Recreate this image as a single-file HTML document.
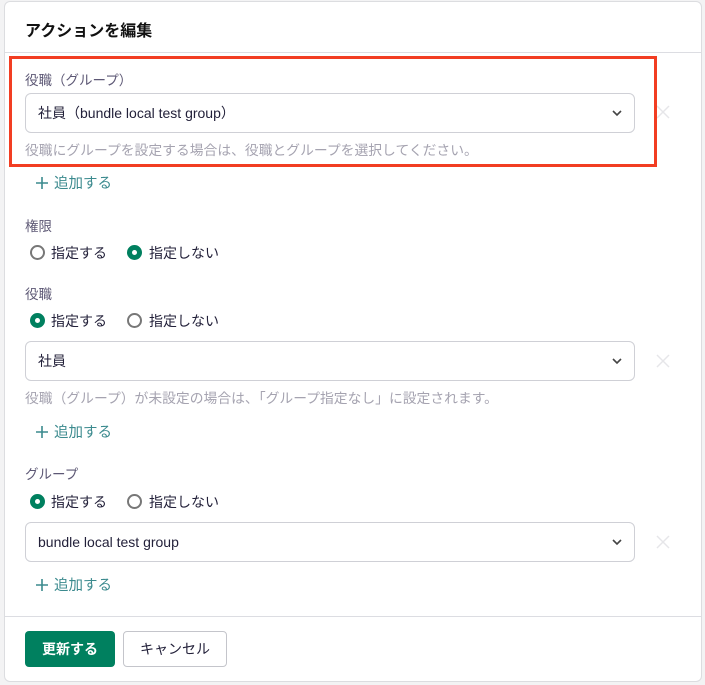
<!DOCTYPE html>
<html><head><meta charset="utf-8"><style>
*{box-sizing:border-box;margin:0;padding:0}
body{width:705px;height:685px;background:#f3f3f4;font-family:"Liberation Sans","Noto Sans CJK JP",sans-serif;position:relative;overflow:hidden;color:#23213a}
.card{position:absolute;left:4px;top:1px;width:698px;height:681px;background:#fff;border:1px solid #dcdde0;border-radius:6px}
.a{position:absolute;white-space:nowrap}
.title{left:25px;top:17px;font-size:16px;font-weight:bold;color:#111}
.hr{position:absolute;left:5px;width:696px;height:1px;background:#dcdde2}
.lbl{font-size:13.5px;color:#5d5875}
.help{font-size:13.8px;color:#a5a3b0}
.sel{position:absolute;left:25px;width:610px;height:40px;border:1px solid #cfd0d6;border-radius:6px;font-size:14px;padding:0 12px;line-height:38px;color:#23213a}
.sel svg{position:absolute;right:11px;top:15px}
.x{position:absolute;left:655px}
.add{font-size:14.5px;color:#3b8a8e}
.add svg{display:inline-block;margin-right:6px;vertical-align:-1px}
.r{position:absolute;width:15px;height:15px;border-radius:50%;border:2px solid #777}
.r.on{border:none;background:#00805f}
.r.on::after{content:"";position:absolute;left:5px;top:5px;width:5px;height:5px;border-radius:50%;background:#fff}
.rt{font-size:14px;color:#23213a}
.red{position:absolute;left:9px;top:56px;width:648px;height:111px;border:3px solid #f23d22}
.btn{position:absolute;top:631px;height:36px;border-radius:4px;font-size:14px;text-align:center;line-height:36px}
</style></head><body>
<div class="card"></div>
<div class="a title">アクションを編集</div>
<div class="hr" style="top:52px"></div>
<div class="hr" style="top:616px"></div>

<div class="a lbl" style="left:25px;top:69px">役職（グループ）</div>
<div class="sel" style="top:93px">社員（bundle local test group）<svg width="12" height="8"><path d="M2 2l4 4 4-4" stroke="#444" stroke-width="1.6" fill="none"/></svg></div>
<svg class="x" style="top:104px" width="16" height="16"><path d="M2 2l12 12M14 2L2 14" stroke="#e6e6e9" stroke-width="1.5"/></svg>
<div class="a help" style="left:25px;top:139px">役職にグループを設定する場合は、役職とグループを選択してください。</div>
<div class="red"></div>
<div class="a add" style="left:36px;top:172px"><svg width="12" height="12"><path d="M6 0v12M0 6h12" stroke="#3b8a8e" stroke-width="1.6"/></svg>追加する</div>

<div class="a lbl" style="left:25px;top:215px">権限</div>
<div class="r" style="left:30px;top:245px"></div><div class="a rt" style="left:51px;top:243px">指定する</div>
<div class="r on" style="left:127px;top:245px"></div><div class="a rt" style="left:149px;top:243px">指定しない</div>

<div class="a lbl" style="left:25px;top:283px">役職</div>
<div class="r on" style="left:30px;top:313px"></div><div class="a rt" style="left:51px;top:311px">指定する</div>
<div class="r" style="left:127px;top:313px"></div><div class="a rt" style="left:149px;top:311px">指定しない</div>
<div class="sel" style="top:341px">社員<svg width="12" height="8"><path d="M2 2l4 4 4-4" stroke="#444" stroke-width="1.6" fill="none"/></svg></div>
<svg class="x" style="top:353px" width="16" height="16"><path d="M2 2l12 12M14 2L2 14" stroke="#e6e6e9" stroke-width="1.5"/></svg>
<div class="a help" style="left:25px;top:387px">役職（グループ）が未設定の場合は、「グループ指定なし」に設定されます。</div>
<div class="a add" style="left:36px;top:421px"><svg width="12" height="12"><path d="M6 0v12M0 6h12" stroke="#3b8a8e" stroke-width="1.6"/></svg>追加する</div>

<div class="a lbl" style="left:25px;top:463px">グループ</div>
<div class="r on" style="left:30px;top:494px"></div><div class="a rt" style="left:51px;top:492px">指定する</div>
<div class="r" style="left:127px;top:494px"></div><div class="a rt" style="left:149px;top:492px">指定しない</div>
<div class="sel" style="top:522px">bundle local test group<svg width="12" height="8"><path d="M2 2l4 4 4-4" stroke="#444" stroke-width="1.6" fill="none"/></svg></div>
<svg class="x" style="top:534px" width="16" height="16"><path d="M2 2l12 12M14 2L2 14" stroke="#e6e6e9" stroke-width="1.5"/></svg>
<div class="a add" style="left:36px;top:574px"><svg width="12" height="12"><path d="M6 0v12M0 6h12" stroke="#3b8a8e" stroke-width="1.6"/></svg>追加する</div>

<div class="btn" style="left:25px;width:90px;background:#00805f;color:#fff;font-weight:bold">更新する</div>
<div class="btn" style="left:123px;width:104px;border:1px solid #c4c5cb;color:#23213a;line-height:34px">キャンセル</div>
</body></html>
